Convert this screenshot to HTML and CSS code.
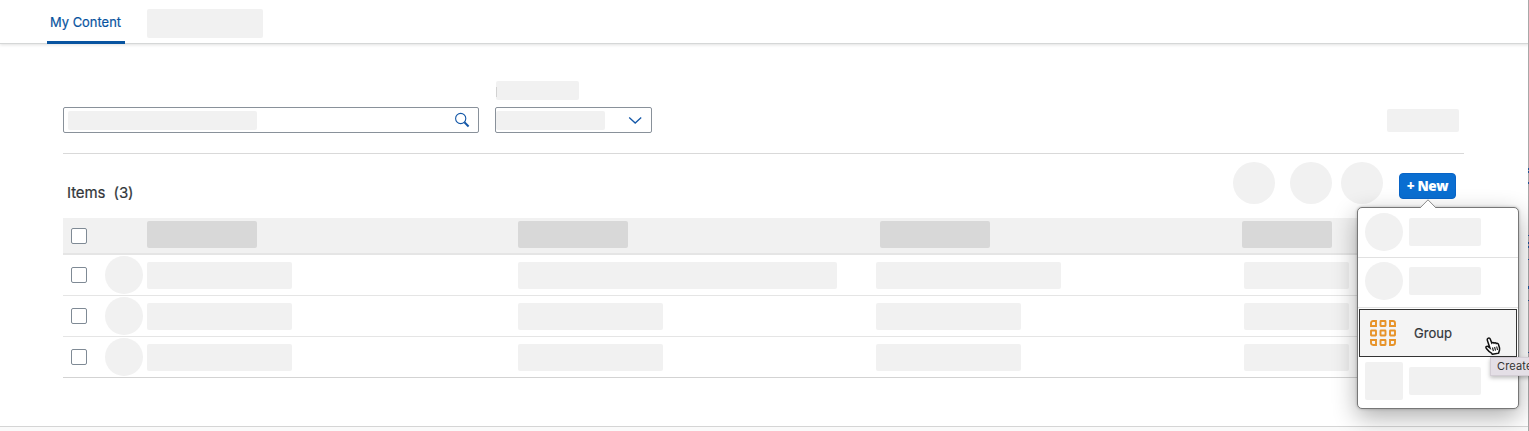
FILE: index.html
```html
<!DOCTYPE html>
<html lang="en">
<head>
<meta charset="utf-8">
<title>My Content</title>
<link rel="stylesheet" href="styles.css">
</head>
<body>
<div class="page">
  <header class="tabs">
    <div class="tab active"><svg class="fit" width="72" height="20"><text x="0" y="14" textLength="71" lengthAdjust="spacingAndGlyphs">My Content</text></svg></div>
    <div class="ph tab-ph"></div>
  </header>
  <main class="content">
    <section class="filters">
      <div class="search">
        <div class="ph search-ph"></div>
        <svg width="16" height="16" viewBox="0 0 16 16" fill="none" stroke="#1458a8"><circle cx="6.7" cy="6.5" r="5.1" stroke-width="1.1"/><path d="M10.400 10.300l4.200 4.200" stroke-width="2"/></svg>
      </div>
      <div class="field">
        <div class="ph label-ph"></div>
        <div class="select">
          <div class="ph select-ph"></div>
          <svg width="14" height="8" viewBox="0 0 14 8" fill="none" stroke="#1458a8" stroke-width="1.3"><path d="M1.200 1.500l6 5.600 6-5.600"/></svg>
        </div>
      </div>
      <div class="ph go-ph"></div>
    </section>
    <section class="toolbar">
      <h1 class="title">Items&nbsp; (3)</h1>
      <div class="ph dot"></div>
      <div class="ph dot second"></div>
      <div class="ph dot third"></div>
      <button class="new">+ New</button>
    </section>
    <section class="table">
      <div class="row head">
        <i class="check"></i><span></span>
        <div class="ph w110"></div><div class="ph w110"></div><div class="ph w110 shift"></div><div class="ph w90"></div>
      </div>
      <div class="row">
        <i class="check"></i><div class="ph avatar"></div>
        <div class="ph w145"></div><div class="ph w319"></div><div class="ph w185"></div><div class="ph w105"></div>
      </div>
      <div class="row">
        <i class="check"></i><div class="ph avatar"></div>
        <div class="ph w145"></div><div class="ph w145"></div><div class="ph w145"></div><div class="ph w105"></div>
      </div>
      <div class="row last">
        <i class="check"></i><div class="ph avatar"></div>
        <div class="ph w145"></div><div class="ph w145"></div><div class="ph w145"></div><div class="ph w105"></div>
      </div>
    </section>
  </main>
  <footer class="foot"></footer>

  <svg class="edge" width="1" height="431" viewBox="0 0 1 431"><path fill="#a8a8a8" d="M0 0h1v431H0z"/><path fill="#1f5596" d="M0 168h1v2H0zM0 171h1v2H0zM0 182h1v2H0zM0 235h1v1H0zM0 242h1v2H0zM0 246h1v2H0zM0 259h1v1H0zM0 286h1v3H0zM0 300h1v1H0zM0 352h1v1H0z"/></svg>

  <div class="menu">
    <svg class="arrow" width="18" height="9" viewBox="0 0 18 9"><path d="M1 9L9 .8 17 9" fill="#fff" stroke="#8a8a8a"/></svg>
    <div class="item"><div class="ph avatar"></div><div class="ph menu-ph"></div></div>
    <div class="item second-item"><div class="ph avatar"></div><div class="ph menu-ph"></div></div>
    <div class="item selected">
      <svg class="grid-icon" width="26" height="26" viewBox="0 0 26 26" fill="none" stroke="#e79329" stroke-width="1.9">
        <path d="M3.200 1H6v5H1V3.200Q1 1 3.200 1z"/><rect x="10.500" y="1" width="5" height="5" rx=".4"/><path d="M20 1h2.800Q25 1 25 3.200V6h-5z"/>
        <rect x="1" y="10.500" width="5" height="5" rx=".4"/><rect x="10.500" y="10.500" width="5" height="5" rx=".4"/><rect x="20" y="10.500" width="5" height="5" rx=".4"/>
        <path d="M1 20h5v5H3.200Q1 25 1 22.800z"/><rect x="10.500" y="20" width="5" height="5" rx=".4"/><path d="M20 20h5v2.800q0 2.200-2.200 2.200H20z"/>
      </svg>
      <svg class="fit" width="42" height="20"><text x="0" y="15" textLength="38" lengthAdjust="spacingAndGlyphs">Group</text></svg>
    </div>
    <div class="item bottom"><div class="ph square"></div><div class="ph menu-ph"></div></div>
  </div>
  <div class="tooltip">Create</div>
  <svg class="cursor" width="16" height="18" viewBox="0 0 16 18"><path d="M3 1.300c1-.6 1.900-.1 2.300.9l1.500 3.900c.7-.8 1.600-.8 2.200 0 .8-.6 1.800-.4 2.200.4.900-.5 1.900-.1 2.200.8l1 3.200c.4 1.600.1 3.100-.5 4.500l-.3 1.200-6.300 1.100-.8-1.200c-1.500-.8-3.600-2.500-4.900-4.300C.9 10.900.7 10 1.300 9.500c.7-.5 1.700-.2 2.600.6l1 .8L2.400 3.400C2.100 2.500 2.300 1.700 3 1.300z" fill="#fff" stroke="#111" stroke-width="1.500"/><path d="M7.500 10.500l.9 3.600M9.600 10l.9 3.600M11.700 9.500l.8 3.500" stroke="#111" stroke-width="1.100" fill="none"/></svg>
</div>
</body>
</html>
```
FILE: styles.css
```css
* { box-sizing: border-box; }
body { margin: 0; background: #fff; font-family: Inter, "Liberation Sans", sans-serif; color: #32363a; }
.page { position: relative; width: 1529px; height: 431px; overflow: hidden; display: flex; flex-direction: column; }
.ph { background: #f1f1f1; border-radius: 2px; flex: none; }
.fit { display: block; overflow: visible; flex: none; }

.tabs { height: 44px; flex: none; display: flex; padding-left: 47px; border-bottom: 1px solid #d5d7d7; box-shadow: 0 1px 3px rgba(0, 0, 0, .12); }
.tab { width: 78px; height: 44px; padding: 13px 0 0 3px; border-bottom: 3px solid #0854a0; border-radius: 2px 2px 0 0; }
.tab text { fill: #0854a0; font-size: 13.5px; stroke: #0854a0; stroke-width: .2px; }
.tab-ph { width: 116px; height: 29px; margin: 9px 0 0 22px; }

.content { flex: 1; padding-left: 63px; width: 1464px; }
.filters { height: 110px; border-bottom: 1px solid #d9d9d9; display: flex; align-items: flex-end; padding: 0 5px 20px 0; }
.search, .select { height: 26px; border: 1px solid #89919a; border-radius: 2px; display: flex; align-items: center; }
.search { width: 416px; padding: 0 8px 0 4px; justify-content: space-between; }
.search-ph { width: 189px; height: 19px; }
.field { width: 157px; margin-left: 16px; }
.label-ph { width: 83px; height: 19px; margin: 0 0 7px 1px; background: linear-gradient(#d2d2d2, #d2d2d2) 0 6px / 1px 10px no-repeat #f1f1f1; }
.select { justify-content: space-between; padding-right: 9px; }
.select-ph { width: 109px; height: 19px; }
.go-ph { width: 72px; height: 23px; margin: 0 0 1px auto; }

.toolbar { height: 64px; display: flex; align-items: flex-start; padding: 8px 8px 0 4px; }
.title { margin: 21px auto 0 0; font-size: 15px; line-height: 20px; font-weight: 400; letter-spacing: -.1px; -webkit-text-stroke: .2px #32363a; }
.dot { width: 42px; height: 42px; border-radius: 50%; }
.second { margin-left: 15px; }
.third { margin-left: 9px; }
.new { width: 57px; height: 26px; margin: 11px 0 0 16px; padding: 0; border: 1px solid #0864c7; border-radius: 4px; background: #0a6ed1; color: #fff; font: 800 13.5px "Open Sans", sans-serif; letter-spacing: -.35px; }

.row { display: grid; grid-template-columns: 42px 42px 371px 358px 368px 1fr; align-items: center; height: 41px; border-bottom: 1px solid #e5e5e5; }
.row .ph:not(.avatar) { height: 27px; }
.row.head { height: 37px; background: #f1f1f1; border-bottom: 2px solid #e5e5e5; }
.row.head .ph { background: #d8d8d8; margin-bottom: 2px; }
.row.last { border-color: #d3d3d3; }
.check { width: 16px; height: 16px; margin-left: 8px; border: 1px solid #7f8a95; border-radius: 2px; background: #fff; }
.avatar { width: 38px; height: 38px; border-radius: 50%; }
.w110 { width: 110px; }
.w90 { width: 90px; margin-left: -2px; }
.shift { margin-left: 4px; }
.w145 { width: 145px; }
.w319 { width: 319px; }
.w185 { width: 185px; }
.w105 { width: 105px; }
.foot { height: 5px; flex: none; border-top: 1px solid #d5d5d5; background: #fafafa; }
.edge { position: absolute; right: 0; top: 0; }

.menu { position: absolute; left: 1357px; top: 207px; width: 162px; height: 202px; border: 1px solid #777; border-radius: 5px; background: #fff; box-shadow: 0 8px 24px rgba(0, 0, 0, .32), 0 0 3px rgba(0, 0, 0, .25); }
.arrow { position: absolute; left: 61px; top: -9px; }
.item { display: flex; align-items: center; gap: 6px; height: 50px; padding: 0 0 1px 7px; border-bottom: 1px solid #e1e1e1; }
.item.second-item { padding-bottom: 4px; }
.item.selected { height: 48px; margin: 1px 1px 0; padding: 0 0 1px 10px; gap: 18px; border: 1px solid #333; background: #f4f4f4; }
.item.bottom { height: 49px; border-bottom: 0; padding-bottom: 2px; }
.item text { font-size: 13.5px; fill: #32363a; stroke: #32363a; stroke-width: .2px; }
.menu-ph { width: 72px; height: 28px; }
.square { width: 38px; height: 38px; }
.tooltip { position: absolute; left: 1490px; top: 357px; width: 60px; height: 19px; padding-left: 6px; font-size: 11px; line-height: 16px; letter-spacing: .15px; color: #333; background: #e4dfe6; border: 1px solid #d3cdd5; box-shadow: 0 2px 4px rgba(0, 0, 0, .25); }
.cursor { position: absolute; left: 1485px; top: 337px; }
```
